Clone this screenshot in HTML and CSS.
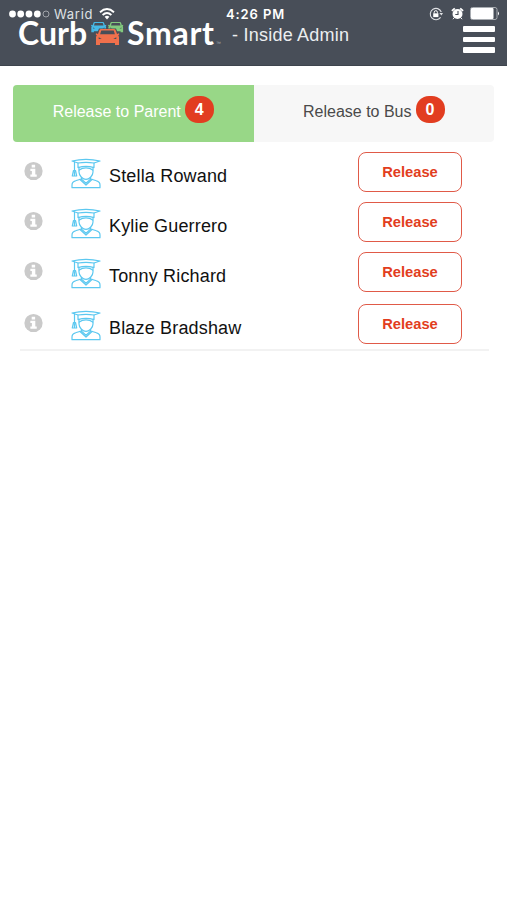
FILE: index.html
```
<!DOCTYPE html>
<html lang="en">
<head>
<meta charset="utf-8">
<title>Curb Smart - Inside Admin</title>
<link rel="stylesheet" href="styles.css">
</head>
<body>
<svg class="defs" width="0" height="0" aria-hidden="true">
  <symbol id="info" viewBox="0 0 20 20">
    <circle cx="10" cy="10" r="9.6" fill="#cacaca"/>
    <path d="M8.100 3.300h3.600v3H8.100zM6.700 7.600h5.200v6h1.500v2.400H6.700v-2.400h1.600V10H6.700z" fill="#fff"/>
  </symbol>
  <symbol id="student" viewBox="0 0 30 30">
    <g fill="none" stroke="#5cc8f0" stroke-width="1.2" stroke-linejoin="round" stroke-linecap="round">
      <path d="M1 2.500Q8 .8 15 .8t14 1.700L23 4.500Q15 3.200 7 4.500z"/>
      <path d="M7 4.500v4.600Q15 6.500 23 9.100V4.500"/>
      <path d="M3.500 3.300v8.700M2.500 12h2l1.200 5.500H1.300zM3.500 13v4"/>
      <path d="M8 9v4.500c0 4 4 7.400 7 7.400s7-3.400 7-7.400V9"/>
      <path d="M8.300 11.500Q11 9.300 15 9.300t6.700 2.200"/>
      <path d="M10.500 18.800v1.900L15 24.800l4.500-4.100v-1.900"/>
      <path d="M9.500 20.700 4.500 22.300Q1 23.300 1 26.500v2.700h28v-2.700q0-3.200-3.500-4.200l-5-1.600"/>
      <path d="M9 21l6 5.500 6-5.500"/>
    </g>
  </symbol>
  <symbol id="car" viewBox="0 0 24 16">
    <path fill-rule="evenodd" d="M5.500 0h13q1.300 0 1.700 1.200L21.500 5l2-.8.5 1-1.300 1.300q.8.700.8 2V16h-4v-2h-15v2h-4V8.500q0-1.300.8-2L0 5.200l.5-1 2 .8 1.300-3.800Q4.200 0 5.500 0zM5.800 1.400 4.600 5.200h14.800l-1.200-3.800zM3.200 8.300v1.700h3zM20.800 8.300v1.700h-3z"/>
  </symbol>
</svg>

<header class="header">
  <div class="status">
    <div class="carrier">
      <svg width="41" height="10" viewBox="0 0 41 10">
        <g fill="#fff"><circle cx="3.500" cy="5" r="3.400"/><circle cx="11.700" cy="5" r="3.400"/><circle cx="20" cy="5" r="3.400"/><circle cx="28.300" cy="5" r="3.400"/></g>
        <circle cx="37" cy="5" r="3" fill="none" stroke="#a9adb2" stroke-width=".9"/>
      </svg>
      <span class="network">Warid</span>
      <svg width="16" height="12" viewBox="0 0 16 12">
        <g fill="none" stroke="#fff" stroke-width="1.900"><path d="M1 4.200Q8-2 15 4.200"/><path d="M3.600 7Q8 3.200 12.400 7"/></g>
        <path d="M5.600 8.800Q8 6.900 10.400 8.800L8 11.400z" fill="#fff"/>
      </svg>
    </div>
    <div class="time">4:26 PM</div>
    <div class="indicators">
      <svg width="14" height="14" viewBox="0 0 14 14">
        <path d="M12.300 5A5.700 5.700 0 1 0 11.600 10.400" fill="none" stroke="#dfe1e4" stroke-width="1.100"/>
        <path d="M10.400 5.900h3.600l-1.600 2.700z" fill="#dfe1e4"/>
        <path d="M4.200 6.300h5.200v3.800H4.200z" fill="#fff"/><path d="M5.200 6.500V5.300a1.600 1.600 0 0 1 3.200 0v1.200" fill="none" stroke="#fff"/>
      </svg>
      <svg class="alarm" width="13" height="13" viewBox="0 0 13 13">
        <circle cx="6.500" cy="7" r="5" fill="#fff"/>
        <path d="M.9 3.900 3.800 1.300M9.200 1.300l2.900 2.600" stroke="#fff" stroke-width="1.800"/>
        <path d="M3 11l-1 1.200M10 11l1 1.200" stroke="#fff"/>
        <path d="M7 4v3.500H4.300" fill="none" stroke="#484e58" stroke-width="1.100"/>
      </svg>
      <svg width="30" height="13" viewBox="0 0 30 13">
        <rect x=".5" y=".5" width="26.500" height="12" rx="2" fill="none" stroke="#a9adb2"/>
        <rect x="1" y="1" width="22.500" height="11" rx="1" fill="#fff"/>
        <path d="M28 4.500q2 2 0 4z" fill="#fff"/>
      </svg>
    </div>
  </div>
  <div class="brand">
    <span class="word curb">Curb</span>
    <svg class="cars" width="33" height="24" viewBox="0 0 33 24">
      <use href="#car" x="0" y="0" width="15.500" height="10.500" fill="#46b9e6"/>
      <use href="#car" x="17" y="0" width="15.500" height="10.500" fill="#82c97e"/>
      <path d="M8 6.500h17l2 5v11H6v-11z" fill="#484e58"/>
      <use href="#car" x="4.500" y="7" width="24" height="16" fill="#f0704c"/>
    </svg>
    <span class="word smart">Smart</span>
    <span class="tm">™</span>
    <span class="section">- Inside Admin</span>
  </div>
  <div class="menu"><i></i><i></i><i></i></div>
</header>

<main class="content">
  <nav class="tabs">
    <div class="tab active">Release to Parent<b class="badge">4</b></div>
    <div class="tab">Release to Bus<b class="badge">0</b></div>
  </nav>
  <div class="list">
    <div class="row"><svg class="info"><use href="#info"/></svg><svg class="student"><use href="#student"/></svg><span class="name">Stella Rowand</span><button class="release">Release</button></div>
    <div class="row"><svg class="info"><use href="#info"/></svg><svg class="student"><use href="#student"/></svg><span class="name">Kylie Guerrero</span><button class="release">Release</button></div>
    <div class="row"><svg class="info"><use href="#info"/></svg><svg class="student"><use href="#student"/></svg><span class="name">Tonny Richard</span><button class="release">Release</button></div>
    <div class="row last"><svg class="info"><use href="#info"/></svg><svg class="student"><use href="#student"/></svg><span class="name">Blaze Bradshaw</span><button class="release">Release</button></div>
  </div>
</main>
</body>
</html>
```
FILE: styles.css
```
* { box-sizing: border-box; }
body {
  margin: 0;
  background: #fff;
  font-family: "Liberation Sans", Arial, sans-serif;
}
svg { display: block; flex: none; }
.defs { position: absolute; }

.header {
  position: relative;
  height: 66px;
  background: #484e58;
  border-bottom: 1px solid #3e444d;
  display: flex;
  justify-content: space-between;
  padding: 17px 12px 0 18px;
  color: #fff;
}
.status {
  position: absolute;
  inset: 0 0 auto;
  height: 27px;
  display: grid;
  grid-template-columns: 1fr auto 1fr;
  align-items: center;
  padding: 0 7px 0 9px;
  font: 13px/16px Inter, sans-serif;
}
.carrier, .indicators { display: flex; align-items: center; }
.network { margin: 0 6px 0 4px; width: 39px; color: #dfe1e4; letter-spacing: .7px; white-space: nowrap; }
.time { font-weight: 600; letter-spacing: .9px; padding-left: 2px; }
.indicators { justify-content: flex-end; }
.alarm { margin: 0 6px 0 8px; }

.brand { display: flex; white-space: nowrap; }
.word { font: 700 32px/32px Lato, sans-serif; }
.curb { width: 73px; }
.cars { margin-top: 5px; }
.smart { margin-left: 3px; width: 89px; letter-spacing: .7px; }
.tm { font-size: 5px; line-height: 52px; width: 6px; color: #a9adb2; }
.section { margin-left: 10px; font-size: 18px; line-height: 36px; letter-spacing: .23px; color: #eceef0; }
.menu { width: 32px; padding-top: 9px; display: flex; flex-direction: column; gap: 5px; }
.menu i { height: 5.500px; border-radius: 1px; background: #fff; }

.content { padding: 19px 13px 0; }
.tabs { display: flex; height: 57px; background: #f7f7f7; border-radius: 4px; overflow: hidden; }
.tab {
  flex: 1;
  display: flex;
  align-items: flex-start;
  justify-content: center;
  padding-top: 11px;
  font-size: 16px;
  line-height: 31px;
  color: #4a4a4a;
}
.active { background: #98d787; color: #fff; }
.badge {
  width: 29px;
  height: 27px;
  margin-left: 4px;
  border-radius: 13px;
  background: #e23d20;
  color: #fff;
  text-align: center;
  line-height: 28px;
}

.list { margin: 5px 5px 0 7px; border-bottom: 2px solid #f2f2f2; }
.row { height: 50px; display: flex; align-items: center; padding-left: 4px; }
.last { height: 52px; padding-top: 2px; }
.info { width: 19px; height: 20px; margin-top: -2px; }
.student { width: 30px; height: 31px; margin: 3px 8px 0 28px; }
.name { width: 249px; padding-top: 7px; font-size: 18px; line-height: 24px; letter-spacing: .17px; color: #111; }
.release {
  width: 104px;
  height: 40px;
  border: 1.500px solid #e05a48;
  border-radius: 8px;
  background: #fff;
  color: #e23d20;
  font: 700 14.700px/20px "Liberation Sans", Arial, sans-serif;
}
```
